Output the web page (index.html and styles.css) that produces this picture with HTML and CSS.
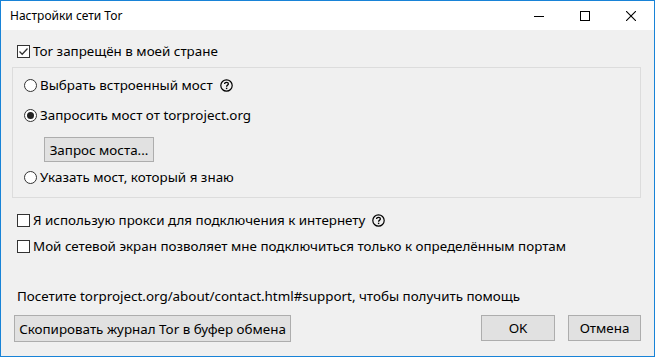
FILE: index.html
```html
<!DOCTYPE html>
<html lang="ru">
<head>
<meta charset="utf-8">
<title>Настройки сети Tor</title>
<link rel="stylesheet" href="styles.css">
</head>
<body>
<div class="window">
  <div class="titlebar">
    <div class="title">Настройки сети Tor</div>
    <div class="controls">
      <div class="ctl"><svg width="10" height="10" viewBox="0 0 10 10"><path d="M0 5.5H10" stroke="#000" stroke-width="1"/></svg></div>
      <div class="ctl"><svg width="10" height="10" viewBox="0 0 10 10"><rect x="0.5" y="0.5" width="9" height="9" fill="none" stroke="#000" stroke-width="1"/></svg></div>
      <div class="ctl"><svg width="10" height="10" viewBox="0 0 10 10"><path d="M0 0L10 10M10 0L0 10" stroke="#000" stroke-width="1.1"/></svg></div>
    </div>
  </div>
  <div class="content">
    <label class="row top-check">
      <span class="check checked"><svg width="11" height="11" viewBox="0 0 11 11"><path d="M1.5 5.5L4.2 8.2L9.5 2.5" fill="none" stroke="#333" stroke-width="1.3"/></svg></span>
      <span>Tor запрещён в моей стране</span>
    </label>
    <div class="group">
      <div class="row radio-row r1">
        <span class="radio"></span>
        <span>Выбрать встроенный мост</span>
        <span class="help"><svg width="13" height="13" viewBox="0 0 13 13"><circle cx="6.5" cy="6.5" r="5.7" fill="none" stroke="#000" stroke-width="1.2"/><path d="M4.6 5.1C4.6 3.9 5.4 3.3 6.5 3.3C7.6 3.3 8.4 4 8.4 4.9C8.4 6.1 6.6 6.2 6.6 7.7" fill="none" stroke="#000" stroke-width="1.3"/><rect x="5.9" y="8.7" width="1.4" height="1.4" fill="#000"/></svg></span>
      </div>
      <div class="row radio-row r2">
        <span class="radio on"></span>
        <span>Запросить мост от torproject.org</span>
      </div>
      <div class="btn-wrap"><button class="btn req">Запрос моста...</button></div>
      <div class="row radio-row r3">
        <span class="radio"></span>
        <span>Указать мост, который я знаю</span>
      </div>
    </div>
    <label class="row check-row c1">
      <span class="check"></span>
      <span>Я использую прокси для подключения к интернету</span>
      <span class="help"><svg width="13" height="13" viewBox="0 0 13 13"><circle cx="6.5" cy="6.5" r="5.7" fill="none" stroke="#000" stroke-width="1.2"/><path d="M4.6 5.1C4.6 3.9 5.4 3.3 6.5 3.3C7.6 3.3 8.4 4 8.4 4.9C8.4 6.1 6.6 6.2 6.6 7.7" fill="none" stroke="#000" stroke-width="1.3"/><rect x="5.9" y="8.7" width="1.4" height="1.4" fill="#000"/></svg></span>
    </label>
    <label class="row check-row c2">
      <span class="check"></span>
      <span>Мой сетевой экран позволяет мне подключиться только к определённым портам</span>
    </label>
    <div class="support">Посетите torproject.org/about/contact.html#support, чтобы получить помощь</div>
    <div class="buttons">
      <button class="btn copy">Скопировать журнал Tor в буфер обмена</button>
      <div class="spacer"></div>
      <button class="btn ok">OK</button>
      <button class="btn cancel">Отмена</button>
    </div>
  </div>
</div>
</body>
</html>
```
FILE: styles.css
```css
html, body {
  margin: 0;
  padding: 0;
  background: #f0f0f0;
}
.window {
  width: 655px;
  height: 357px;
  box-sizing: border-box;
  border: 1px solid #1883d7;
  display: flex;
  flex-direction: column;
  font-family: "Noto Sans", "Open Sans", sans-serif;
  font-size: 13.4px;
  color: #000;
  background: #f0f0f0;
}
.titlebar {
  height: 29px;
  background: #fff;
  display: flex;
  align-items: center;
  flex: none;
}
.title {
  flex: 1;
  padding-left: 9px;
  font-size: 12px;
  padding-bottom: 1px;
}
.controls {
  display: flex;
  height: 29px;
}
.ctl {
  width: 46px;
  display: flex;
  align-items: center;
  justify-content: center;
}
.content {
  flex: 1;
  display: flex;
  flex-direction: column;
  padding: 0 13px 0 11px;
}
.row {
  display: flex;
  align-items: center;
  height: 20px;
  white-space: nowrap;
}
.top-check {
  margin-top: 11px;
  padding-left: 5px;
}
.check {
  width: 11px;
  height: 11px;
  border: 1px solid #333;
  background: #fff;
  margin-right: 3px;
  flex: none;
  display: flex;
  align-items: center;
  justify-content: center;
}
.radio {
  width: 11px;
  height: 11px;
  border: 1px solid #333;
  border-radius: 50%;
  background: #fff;
  margin-right: 3px;
  flex: none;
  display: flex;
  align-items: center;
  justify-content: center;
}
.radio.on::after {
  content: "";
  width: 7px;
  height: 7px;
  border-radius: 50%;
  background: #222;
}
.help {
  margin-left: 7px;
  display: flex;
}
.group {
  margin-top: 6px;
  border: 1px solid #dcdcdc;
  height: 131px;
  box-sizing: border-box;
  padding-left: 11px;
  display: flex;
  flex-direction: column;
}
.r1 { margin-top: 7px; }
.r2 { margin-top: 10px; }
.btn-wrap {
  margin-top: 12px;
  padding-left: 20px;
  display: flex;
}
.btn {
  font-family: inherit;
  font-size: 13.4px;
  color: #000;
  background: #e1e1e1;
  border: 1px solid #adadad;
  margin: 0;
  padding: 0;
  height: 25px;
  white-space: nowrap;
  display: flex;
  align-items: center;
  justify-content: center;
}
.req { width: 110px; }
.r3 { margin-top: 5px; }
.check-row { padding-left: 5px; }
.c1 { margin-top: 12px; }
.c2 { margin-top: 6px; }
.support {
  margin-top: 30px;
  padding-left: 5px;
  height: 20px;
  line-height: 20px;
  white-space: nowrap;
}
.buttons {
  margin-top: 9px;
  display: flex;
  align-items: flex-start;
}
.copy { width: 277px; height: 27px; margin-left: 2px; }
.spacer { flex: 1; }
.ok { width: 74px; height: 26px; margin-right: 13px; }
.cancel { width: 73px; height: 26px; }
```
